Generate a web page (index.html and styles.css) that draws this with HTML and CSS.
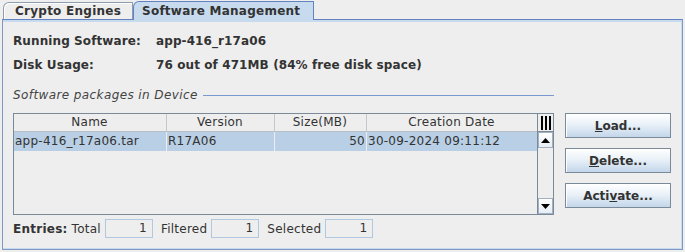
FILE: index.html
```html
<!DOCTYPE html>
<html lang="en">
<head>
    <meta charset="UTF-8">
    <title>Software Management</title>
    <link rel="stylesheet" href="styles.css">
</head>
<body>
    <div class="tabs">
        <div class="tab">Crypto Engines</div>
        <div class="tab selected">Software Management</div>
    </div>
    <div class="panel">
        <div class="info">
            <span>Running Software:</span><span>app-416_r17a06</span>
            <span>Disk Usage:</span><span>76 out of 471MB (84% free disk space)</span>
        </div>

        <div class="group-title">
            <span>Software packages in Device</span>
            <div class="rule"></div>
        </div>

        <div class="group-body">
            <div class="table-box">
                <div class="table-view">
                    <div class="row head">
                        <div class="cell c-name">Name</div>
                        <div class="cell c-ver">Version</div>
                        <div class="cell c-size">Size(MB)</div>
                        <div class="cell c-date">Creation Date</div>
                    </div>
                    <div class="row sel">
                        <div class="cell c-name">app-416_r17a06.tar</div>
                        <div class="cell c-ver">R17A06</div>
                        <div class="cell c-size num">50</div>
                        <div class="cell c-date">30-09-2024 09:11:12</div>
                    </div>
                </div>
                <div class="vscroll">
                    <div class="corner">
                        <svg width="12" height="16" viewBox="0 0 12 16">
                            <rect x="1" y="1" width="2" height="14" fill="#000"/>
                            <rect x="5" y="1" width="2" height="14" fill="#000"/>
                            <rect x="9" y="1" width="2" height="14" fill="#000"/>
                        </svg>
                    </div>
                    <div class="arrow">
                        <svg width="9" height="5" viewBox="0 0 9 5"><path d="M0 5 L4.5 0 L9 5 Z" fill="#000"/></svg>
                    </div>
                    <div class="track"></div>
                    <div class="arrow">
                        <svg width="9" height="5" viewBox="0 0 9 5"><path d="M0 0 L9 0 L4.5 5 Z" fill="#000"/></svg>
                    </div>
                </div>
            </div>

            <div class="actions">
                <button class="btn"><u>L</u>oad...</button>
                <button class="btn"><u>D</u>elete...</button>
                <button class="btn">Acti<u>v</u>ate...</button>
            </div>
        </div>

        <div class="entries">
            <b>Entries:</b>
            <span class="lbl">Total</span>
            <div class="count">1</div>
            <span class="lbl">Filtered</span>
            <div class="count">1</div>
            <span class="lbl">Selected</span>
            <div class="count">1</div>
        </div>
    </div>
</body>
</html>
```

FILE: styles.css
```css
* {
    margin: 0;
    padding: 0;
    box-sizing: border-box;
    font-family: 'DejaVu Sans', sans-serif;
}

body {
    width: 685px;
    height: 252px;
    background: #eeeeee;
    color: #333333;
    font-size: 12px;
    letter-spacing: 0.25px;
    overflow: hidden;
}

/* tabs */

.tabs {
    display: flex;
    height: 19px;
    padding-left: 3px;
    align-items: flex-end;
}

.tab {
    height: 17px;
    padding: 0 0 0 11px;
    width: 130px;
    line-height: 16px;
    font-weight: bold;
    font-size: 12px;
    border: 1px solid #8e9cb0;
    border-bottom: none;
    border-top-left-radius: 6px;
    box-shadow: inset 1px 1px 0 #ffffff;
    background: #eeeeee;
}

.tab.selected {
    width: 181px;
    height: 19px;
    padding-left: 8px;
    line-height: 18px;
    margin-bottom: -1px;
    position: relative;
    z-index: 1;
    background: #c8daee;
    border-color: #6382bf;
    box-shadow: none;
}

/* panel */

.panel {
    margin: 0 2px;
    height: 231px;
    border: 1px solid #7f98c4;
    border-top-color: #6382bf;
    box-shadow: inset 0 2px 0 #c8daee, inset -1px 0 0 #c8daee, inset 0 -1px 0 #c8daee;
    padding: 9px 10px 0 10px;
}

.info {
    display: grid;
    grid-template-columns: 143px auto;
    grid-auto-rows: 24px;
    line-height: 24px;
    font-weight: bold;
    letter-spacing: 0.1px;
}

.group-title {
    display: flex;
    align-items: center;
    width: 541px;
    margin-top: 10px;
    height: 16px;
    font-style: italic;
    letter-spacing: 0.4px;
    color: #444444;
}

.group-title .rule {
    flex: 1;
    height: 1px;
    margin-left: 5px;
    background: #7a99d0;
}

.group-body {
    display: flex;
    margin-top: 10px;
}

/* table */

.table-box {
    display: flex;
    width: 541px;
    height: 102px;
    border: 1px solid #7a8a99;
}

.table-view {
    width: 523px;
}

.row {
    display: flex;
    height: 19px;
    line-height: 18px;
}

.row.head {
    height: 18px;
    line-height: 17px;
    border-bottom: 1px solid #b8bec6;
}

.cell {
    border-right: 1px solid #c4c8cc;
    padding: 0 2px 0 1px;
    white-space: nowrap;
    overflow: hidden;
}

.head .cell {
    text-align: center;
    background: #eeeeee;
}

.sel .cell {
    background: #b8cfe5;
    border-right-color: #eeeeee;
}

.cell.num {
    text-align: right;
    padding-right: 1px;
}

.c-name { width: 153px; }
.c-ver { width: 108px; }
.c-size { width: 92px; }
.c-date { width: 170px; border-right: none; }

.vscroll {
    width: 16px;
    display: flex;
    flex-direction: column;
    border-left: 1px solid #7a8a99;
}

.corner {
    height: 18px;
    display: flex;
    align-items: center;
    justify-content: center;
    background: #eeeeee;
    border-bottom: 1px solid #7a8a99;
}

.arrow {
    height: 16px;
    display: flex;
    align-items: center;
    justify-content: center;
    background: linear-gradient(#ffffff, #e6edf5);
    border: 1px solid #a3b0bf;
}

.track {
    flex: 1;
    background: #eeeeee;
}

/* buttons */

.actions {
    display: flex;
    flex-direction: column;
    gap: 10px;
    margin-left: 11px;
}

.btn {
    width: 106px;
    height: 25px;
    border: 1px solid #7a8a99;
    background: linear-gradient(#ffffff 0%, #eaf1f8 45%, #c3d6ea 100%);
    box-shadow: inset 1px 1px 0 #ffffff;
    font-size: 12px;
    font-weight: bold;
    color: #333333;
    letter-spacing: 0;
}

/* entries */

.entries {
    display: flex;
    align-items: center;
    margin-top: 4px;
    height: 19px;
}

.entries b {
    margin-right: 4px;
}

.count {
    width: 48px;
    height: 19px;
    line-height: 17px;
    margin: 0 8px 0 4px;
    padding-right: 5px;
    text-align: right;
    border: 1px solid #b0c8e0;
}
```
